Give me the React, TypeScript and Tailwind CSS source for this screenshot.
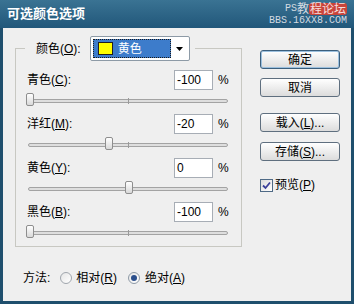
import React from "react";

function U({ c }: { c: string }) {
  return <span className="underline underline-offset-[1px]">{c}</span>;
}

function Slider({ value }: { value: number }) {
  const center = 30 + ((value + 100) / 200) * 198;
  const left = center - 28 - 4;
  return (
    <div className="relative ml-[1px] w-[200px] pt-[9px]">
      <div className="h-[4px] rounded-[2px] border border-[#a3a3a3] bg-[#dedede]" />
      <div className="absolute left-[100px] top-[8px] h-[6px] w-[1px] bg-[#9a9a9a]" />
      <div
        className="absolute top-[3px] h-[13px] w-[8px] rounded-[2px] border border-[#8e8e8e] bg-gradient-to-b from-[#ffffff] to-[#d9d9d9]"
        style={{ left }}
      />
    </div>
  );
}

function Row({ label, k, value, last }: { label: string; k: string; value: number; last?: boolean }) {
  return (
    <div className="flex flex-col">
      <div className="flex h-[20px] items-center">
        <div className="flex-1 text-[12px] text-black">
          {label}(<U c={k} />):
        </div>
        <div className="flex h-[20px] w-[39px] items-center border border-[#a7adb5] bg-white pl-[2px] text-[12px] text-black">
          {value}
        </div>
        <div className="ml-[5px] w-[11px] text-[12px] text-black">%</div>
      </div>
      <div className={last ? "h-[24px]" : "h-[24px]"}>
        <Slider value={value} />
      </div>
    </div>
  );
}

function Btn({ children, def }: { children: React.ReactNode; def?: boolean }) {
  return (
    <div
      className={
        "flex h-[19px] w-[80px] items-center justify-center rounded-[3px] border bg-gradient-to-b from-[#ffffff] to-[#dcdcdc] text-[12px] text-black " +
        (def ? "border-[#3b5f7d] shadow-[inset_0_0_0_1px_#9cc0de]" : "border-[#5f6f7f]")
      }
    >
      {children}
    </div>
  );
}

export default function App() {
  return (
    <div className="flex h-[304px] w-[354px] flex-col bg-[#1f4f6d] font-['Liberation_Sans','Noto_Sans_CJK_SC',sans-serif]">
      <div className="flex h-[28px] items-start justify-between bg-gradient-to-b from-[#3a7393] to-[#21577a] pl-[7px] pr-[7px]">
        <div className="mt-[6px] text-[13px] font-bold leading-[16px] text-white">可选颜色选项</div>
        <div className="mt-[3px] flex flex-col items-end leading-none">
          <div className="flex items-center">
            <span className="font-['Liberation_Mono',monospace] text-[10px] text-[#d3dbe2]">PS</span>
            <span className="text-[12px] text-[#d3dbe2]">教</span>
            <span className="rounded-[3px] bg-[#c9453b] px-[1px] text-[12px] text-[#f6dede]">程论坛</span>
          </div>
          <div className="mt-[1px] font-['Liberation_Mono',monospace] text-[10px] text-[#d3dbe2]">BBS.16XX8.COM</div>
        </div>
      </div>
      <div className="mx-[3px] mb-[3px] flex flex-1 bg-[#efefef] pl-[12px] pt-[8px]">
        <div className="flex flex-col">
          <fieldset className="w-[227px] border border-[#c8c8c2] pl-[11px] pr-[12px]">
            <legend className="ml-[-2px] flex items-center pl-[11px] pr-[5px]">
              <span className="text-[12px] text-black">
                颜色(<U c="O" />):
              </span>
              <div className="ml-[9px] flex h-[25px] w-[100px] items-center rounded-[2px] border border-[#8d9aa6] bg-white pl-[2px] pr-[2px]">
                <div className="flex h-[19px] flex-1 items-center border border-dotted border-[#1a1a1a] bg-[#3d7ccb] pl-[4px]">
                  <div className="h-[13px] w-[15px] border border-[#202020] bg-[#ffff00]" />
                  <span className="ml-[5px] text-[12px] text-white">黄色</span>
                </div>
                <div className="ml-[2px] flex h-[19px] w-[14px] items-center justify-center">
                  <svg width="7" height="4" viewBox="0 0 7 4">
                    <path d="M0 0 H7 L3.5 4 Z" fill="#000" />
                  </svg>
                </div>
              </div>
            </legend>
            <div className="mt-[9px] flex flex-col">
              <Row label="青色" k="C" value={-100} />
              <Row label="洋红" k="M" value={-20} />
              <Row label="黄色" k="Y" value={0} />
              <Row label="黑色" k="B" value={-100} last />
            </div>
          </fieldset>
          <div className="mt-[21px] flex h-[20px] items-center pl-[8px] text-[12px] text-black">
            <span>方法:</span>
            <div className="ml-[10px] h-[12px] w-[12px] rounded-full border border-[#a0a6ad] bg-gradient-to-br from-[#e6e6e6] to-[#ffffff]" />
            <span className="ml-[4px]">
              相对(<U c="R" />)
            </span>
            <div className="ml-[11px] flex h-[12px] w-[12px] items-center justify-center rounded-full border border-[#8e9aa6] bg-gradient-to-br from-[#e6e6e6] to-[#ffffff]">
              <div className="h-[6px] w-[6px] rounded-full bg-[#2b4f8c]" />
            </div>
            <span className="ml-[5px]">
              绝对(<U c="A" />)
            </span>
          </div>
        </div>
        <div className="ml-[18px] mt-[14px] flex flex-col">
          <Btn def>确定</Btn>
          <div className="mt-[9px]">
            <Btn>取消</Btn>
          </div>
          <div className="mt-[16px]">
            <Btn>
              载入(<U c="L" />)...
            </Btn>
          </div>
          <div className="mt-[10px]">
            <Btn>
              存储(<U c="S" />)...
            </Btn>
          </div>
          <div className="mt-[15px] flex items-center text-[12px] text-black">
            <div className="flex h-[13px] w-[13px] items-center justify-center border border-[#4f6a86] bg-gradient-to-br from-[#dcdcdc] to-[#ffffff]">
              <svg width="9" height="9" viewBox="0 0 9 9">
                <path d="M1 4.5 L3.5 7 L8 1.5" stroke="#3a3f9a" strokeWidth="1.8" fill="none" />
              </svg>
            </div>
            <span className="ml-[2px]">
              预览(<U c="P" />)
            </span>
          </div>
        </div>
      </div>
    </div>
  );
}
